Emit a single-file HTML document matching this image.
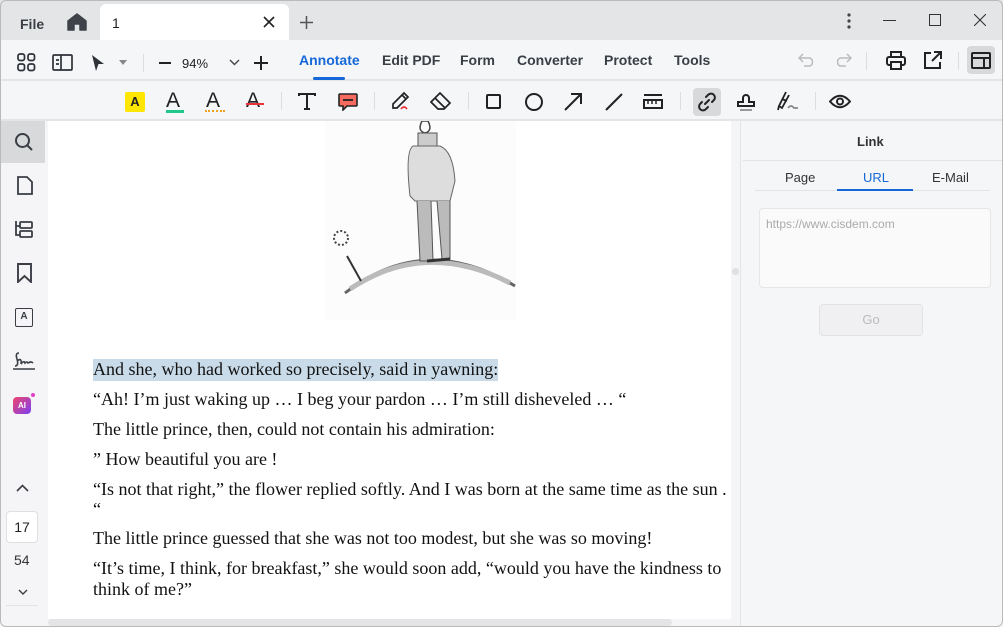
<!DOCTYPE html>
<html><head><meta charset="utf-8">
<style>
*{box-sizing:border-box;margin:0;padding:0}
body{width:1003px;height:627px;overflow:hidden;background:#e4e5e7;font-family:"Liberation Sans",sans-serif;position:relative;color:#2b2f36}
.a{position:absolute}
svg{display:block}
.menu{font-size:14px;color:#3a3e45;font-weight:bold}
.serif{font-family:"Liberation Serif",serif;font-size:18px;color:#111;white-space:nowrap}
</style></head><body>
<!-- window border -->
<div class="a" style="left:0;top:0;width:1003px;height:627px;border:1px solid #b9babc;border-radius:6px;z-index:50;pointer-events:none"></div>
<!-- title bar -->
<div class="a" style="left:0;top:0;width:1003px;height:40px;background:#e4e5e7"></div>
<div class="a menu" style="left:20px;top:16px;font-size:14px">File</div>
<svg class="a" style="left:67px;top:13px" width="20" height="18" viewBox="0 0 20 18"><path d="M10 1 L1 8 V17 H7 V11 H13 V17 H19 V8 Z" fill="#3f4349" stroke="#3f4349" stroke-linejoin="round" stroke-width="1.5"/></svg>
<div class="a" style="left:100px;top:4px;width:189px;height:37px;background:#fff;border-radius:6px 6px 0 0"></div>
<div class="a" style="left:112px;top:15px;font-size:14px;color:#222">1</div>
<svg class="a" style="left:263px;top:16px" width="12" height="12"><path d="M1 1L11 11M11 1L1 11" stroke="#222" stroke-width="1.6"/></svg>
<svg class="a" style="left:300px;top:16px" width="13" height="13"><path d="M6.5 0V13M0 6.5H13" stroke="#555" stroke-width="1.5"/></svg>
<svg class="a" style="left:846px;top:12px" width="6" height="18"><circle cx="3" cy="3" r="1.6" fill="#444"/><circle cx="3" cy="9" r="1.6" fill="#444"/><circle cx="3" cy="15" r="1.6" fill="#444"/></svg>
<div class="a" style="left:883px;top:20px;width:13px;height:1px;background:#333"></div>
<div class="a" style="left:929px;top:14px;width:12px;height:12px;border:1px solid #333"></div>
<svg class="a" style="left:974px;top:14px" width="12" height="12"><path d="M0 0L12 12M12 0L0 12" stroke="#333" stroke-width="1.1"/></svg>
<!-- toolbar -->
<div class="a" style="left:0;top:40px;width:1003px;height:40px;background:#f5f6f8;border-bottom:1px solid #e3e4e6"></div>
<svg class="a" style="left:17px;top:53px" width="19" height="19" fill="none" stroke="#2e3238" stroke-width="1.7"><rect x="1" y="1" width="6.5" height="6.5" rx="2"/><rect x="11" y="1" width="6.5" height="6.5" rx="2"/><rect x="1" y="11" width="6.5" height="6.5" rx="2"/><rect x="11" y="11" width="6.5" height="6.5" rx="2"/></svg>
<svg class="a" style="left:52px;top:54px" width="21" height="17" fill="none" stroke="#2e3238" stroke-width="1.7"><rect x="1" y="1" width="19" height="15" rx="1"/><path d="M9 1V16M4 6H7M4 10H7"/></svg>
<svg class="a" style="left:91px;top:54px" width="14" height="18"><path d="M1 1L13 10H7.5L5 17Z" fill="#2e3238"/></svg>
<svg class="a" style="left:119px;top:60px" width="8" height="5"><path d="M0 0H8L4 5Z" fill="#888"/></svg>
<div class="a" style="left:143px;top:54px;width:1px;height:18px;background:#ddd"></div>
<div class="a" style="left:159px;top:62px;width:12px;height:2px;background:#222"></div>
<div class="a" style="left:182px;top:56px;font-size:13px;color:#222">94%</div>
<svg class="a" style="left:229px;top:59px" width="11" height="7"><path d="M1 1L5.5 5.5L10 1" stroke="#444" stroke-width="1.4" fill="none"/></svg>
<svg class="a" style="left:254px;top:56px" width="14" height="14"><path d="M7 0V14M0 7H14" stroke="#222" stroke-width="2"/></svg>
<div class="a menu" style="left:299px;top:52px;color:#1668d8">Annotate</div>
<div class="a" style="left:313px;top:77px;width:32px;height:3px;border-radius:2px;background:#1668d8"></div>
<div class="a menu" style="left:382px;top:52px">Edit PDF</div>
<div class="a menu" style="left:460px;top:52px">Form</div>
<div class="a menu" style="left:517px;top:52px">Converter</div>
<div class="a menu" style="left:604px;top:52px">Protect</div>
<div class="a menu" style="left:674px;top:52px">Tools</div>
<svg class="a" style="left:798px;top:53px" width="18" height="14" fill="none" stroke="#bbb" stroke-width="1.5"><path d="M5 1L1 5L5 9M1 5H12A4.5 4.5 0 0 1 12 13H6"/></svg>
<svg class="a" style="left:834px;top:53px" width="18" height="14" fill="none" stroke="#bbb" stroke-width="1.5"><path d="M13 1L17 5L13 9M17 5H6A4.5 4.5 0 0 0 6 13H12"/></svg>
<div class="a" style="left:866px;top:52px;width:1px;height:18px;background:#ddd"></div>
<svg class="a" style="left:886px;top:51px" width="20" height="19" fill="none" stroke="#222" stroke-width="2"><path d="M5 6V1H15V6"/><rect x="1" y="6" width="18" height="8" rx="2"/><rect x="5" y="11" width="10" height="7" fill="#f5f6f8"/></svg>
<svg class="a" style="left:923px;top:51px" width="19" height="19" fill="none" stroke="#222" stroke-width="2"><path d="M8 2H2V17H17V11M11 1H18V8M18 1L9 10"/></svg>
<div class="a" style="left:958px;top:52px;width:1px;height:18px;background:#ddd"></div>
<div class="a" style="left:967px;top:46px;width:28px;height:28px;border-radius:4px;background:#d8d9db"></div>
<svg class="a" style="left:971px;top:52px" width="20" height="17" fill="none" stroke="#222" stroke-width="2"><rect x="1" y="1" width="18" height="15" rx="1"/><path d="M1 6H19M13 6V16"/></svg>
<!-- annotation toolbar -->
<div class="a" style="left:0;top:81px;width:1003px;height:39px;background:#f5f6f8;border-bottom:1px solid #e3e4e6"></div>
<div class="a" style="left:125px;top:92px;width:20px;height:20px;background:#ffe600;border-radius:2px;font-size:13px;font-weight:bold;text-align:center;line-height:20px;color:#222">A</div>
<div class="a" style="left:166px;top:89px;font-size:21px;color:#222">A</div><div class="a" style="left:166px;top:110px;width:18px;height:3px;background:#1ec98a"></div>
<div class="a" style="left:206px;top:89px;font-size:21px;color:#222">A</div><div class="a" style="left:205px;top:110px;width:20px;height:2px;border-bottom:2px dotted #f0a020"></div>
<div class="a" style="left:246px;top:89px;font-size:21px;color:#222">A</div><div class="a" style="left:246px;top:103px;width:18px;height:2px;background:#e8333a"></div>
<div class="a" style="left:281px;top:92px;width:1px;height:18px;background:#ddd"></div>
<svg class="a" style="left:298px;top:93px" width="18" height="17" fill="none" stroke="#222" stroke-width="2"><path d="M1 3V1H17V3M9 1V16M6 16H12"/></svg>
<svg class="a" style="left:338px;top:93px" width="20" height="18"><path d="M2 1H18A1 1 0 0 1 19 2V12A1 1 0 0 1 18 13H9L5 17V13H2A1 1 0 0 1 1 12V2A1 1 0 0 1 2 1Z" fill="#f46a5e" stroke="#222" stroke-width="1.6"/><path d="M5 7H15" stroke="#222" stroke-width="1.8"/></svg>
<div class="a" style="left:374px;top:92px;width:1px;height:18px;background:#ddd"></div>
<svg class="a" style="left:391px;top:91px" width="20" height="20" fill="none" stroke-width="1.7"><path d="M13 2L17 6L6 17H2V13Z" stroke="#222"/><path d="M11 4L15 8" stroke="#222"/><path d="M10 18Q13 14 16 18" stroke="#e8333a"/></svg>
<svg class="a" style="left:430px;top:92px" width="22" height="18" fill="none" stroke="#222" stroke-width="1.7"><path d="M8 17L1 10L10 1L20 11L14 17Z M5 6L15 16"/></svg>
<div class="a" style="left:468px;top:92px;width:1px;height:18px;background:#ddd"></div>
<div class="a" style="left:486px;top:94px;width:15px;height:15px;border:2px solid #222;border-radius:2px"></div>
<div class="a" style="left:525px;top:93px;width:18px;height:18px;border:2px solid #222;border-radius:50%"></div>
<svg class="a" style="left:564px;top:92px" width="19" height="19" fill="none" stroke="#222" stroke-width="2"><path d="M1 18L17 2M7 2H17V12"/></svg>
<svg class="a" style="left:605px;top:93px" width="18" height="18"><path d="M1 17L17 1" stroke="#222" stroke-width="2"/></svg>
<svg class="a" style="left:643px;top:94px" width="20" height="16" fill="none" stroke="#222" stroke-width="2"><path d="M1 1H19"/><rect x="1" y="6" width="18" height="8"/><path d="M5 6V10M9 6V10M13 6V10" stroke-width="1.5"/></svg>
<div class="a" style="left:680px;top:92px;width:1px;height:18px;background:#ddd"></div>
<div class="a" style="left:693px;top:88px;width:28px;height:28px;border-radius:4px;background:#d8d9db"></div>
<svg class="a" style="left:697px;top:92px" width="20" height="20" fill="none" stroke="#222" stroke-width="2" stroke-linecap="round"><path d="M8 12L12 8M9 5L11 3A3.5 3.5 0 0 1 17 8L15 10M11 15L9 17A3.5 3.5 0 0 1 3 12L5 10"/></svg>
<svg class="a" style="left:737px;top:91px" width="18" height="20" fill="none" stroke="#222" stroke-width="2"><path d="M6 11V7A3 3 0 1 1 12 7V11H17V15H1V11Z"/><path d="M3 19H15" stroke="#999"/></svg>
<svg class="a" style="left:776px;top:91px" width="22" height="20" fill="none" stroke="#222" stroke-width="1.8"><path d="M10 1L3 15L6 17L13 4M3 15L2 19M6 8L11 10"/><path d="M12 17Q15 13 18 17H22" stroke="#888"/></svg>
<div class="a" style="left:815px;top:92px;width:1px;height:18px;background:#ddd"></div>
<svg class="a" style="left:829px;top:94px" width="22" height="15" fill="none" stroke="#222" stroke-width="2"><path d="M1 7.5Q11 -4 21 7.5Q11 19 1 7.5Z"/><circle cx="11" cy="7.5" r="3"/></svg>
<!-- left sidebar -->
<div class="a" style="left:0;top:121px;width:48px;height:506px;background:#f5f5f7"></div>
<div class="a" style="left:1px;top:121px;width:44px;height:42px;background:#d8d9db"></div>
<svg class="a" style="left:14px;top:132px" width="20" height="20" fill="none" stroke="#3a3e45" stroke-width="2"><circle cx="8.5" cy="8.5" r="6.5"/><path d="M13.5 13.5L18 18"/></svg>
<svg class="a" style="left:17px;top:176px" width="16" height="19" fill="none" stroke="#3a3e45" stroke-width="1.8"><path d="M1 1H10L15 6V18H1Z"/></svg>
<svg class="a" style="left:14px;top:220px" width="19" height="19" fill="none" stroke="#3a3e45" stroke-width="1.8"><path d="M2 1V15H6M2 6H6"/><rect x="6" y="2" width="12" height="6" rx="1"/><rect x="6" y="11" width="12" height="6" rx="1"/></svg>
<svg class="a" style="left:17px;top:263px" width="15" height="20" fill="none" stroke="#3a3e45" stroke-width="1.9"><path d="M1 1H14V19L7.5 13L1 19Z"/></svg>
<div class="a" style="left:15px;top:308px;width:18px;height:19px;border:1.8px solid #3a3e45;border-radius:2px;font-size:10px;font-weight:bold;text-align:center;line-height:16px;color:#3a3e45">A</div>
<svg class="a" style="left:12px;top:351px" width="24" height="20" fill="none" stroke="#3a3e45" stroke-width="1.6"><path d="M1 18H23M7 2Q3 2 5 8Q7 15 3 15M5 10Q10 6 9 13Q12 9 13 12Q15 10 16 12Q19 10 21 12"/></svg>
<div class="a" style="left:13px;top:397px;width:18px;height:17px;border-radius:4px;background:linear-gradient(135deg,#f0466b,#7b3ff2);font-size:8px;font-weight:bold;color:#fff;text-align:center;line-height:17px">AI</div>
<div class="a" style="left:31px;top:393px;width:4px;height:4px;background:#e040c8;border-radius:50%"></div>
<svg class="a" style="left:16px;top:484px" width="13" height="8"><path d="M1 7L6.5 1.5L12 7" stroke="#3a3e45" stroke-width="1.6" fill="none"/></svg>
<div class="a" style="left:6px;top:511px;width:32px;height:32px;background:#fff;border:1px solid #e0e0e2;border-radius:4px;text-align:center;line-height:30px;font-size:14px;color:#222">17</div>
<div class="a" style="left:14px;top:552px;font-size:14px;color:#333">54</div>
<svg class="a" style="left:18px;top:589px" width="10" height="6"><path d="M1 1L5 5L9 1" stroke="#3a3e45" stroke-width="1.4" fill="none"/></svg>
<div class="a" style="left:6px;top:605px;width:32px;height:1px;background:#e3e4e6"></div>
<!-- document -->
<div class="a" style="left:48px;top:121px;width:683px;height:498px;background:#fff"></div>
<div class="a" style="left:48px;top:619px;width:683px;height:8px;background:#f5f5f7"></div>
<div class="a" style="left:48px;top:619px;width:624px;height:7px;background:#e4e4e6;border-radius:4px"></div>
<div class="a" style="left:731px;top:121px;width:9px;height:506px;background:#f5f5f7"></div>
<div class="a" style="left:732px;top:268px;width:7px;height:7px;border-radius:50%;background:#e0e0e2"></div>
<div class="a" style="left:325px;top:121px;width:191px;height:199px;background:#fcfcfc"></div>
<svg class="a" style="left:325px;top:121px" width="191" height="199">
<path d="M20 172Q100 110 190 165" stroke="#666" stroke-width="3" fill="none"/>
<path d="M25 168Q100 118 185 162" stroke="#bbb" stroke-width="5" fill="none"/>
<path d="M22 135L36 160" stroke="#333" stroke-width="2"/>
<circle cx="16" cy="117" r="7" fill="none" stroke="#444" stroke-width="2" stroke-dasharray="2 2"/>
<path d="M97 0Q92 10 100 12Q108 10 103 0Z" fill="none" stroke="#444" stroke-width="1.5"/>
<path d="M93 12H112V25H93Z" fill="#ccc" stroke="#555"/>
<path d="M88 25Q80 30 85 75L90 80H125L130 60Q128 30 115 25Z" fill="#ddd" stroke="#666"/>
<path d="M92 80L95 140H108L106 80M112 80L117 138H125L125 80" fill="#bbb" stroke="#555"/>
<path d="M102 140L125 138" stroke="#333" stroke-width="3"/>
</svg>
<div class="a" style="left:93px;top:359px;width:405px;height:22px;background:#c9dbe8"></div>
<div class="a serif" style="left:93px;top:359px">And she, who had worked so precisely, said in yawning:</div>
<div class="a serif" style="left:93px;top:389px">“Ah! I’m just waking up … I beg your pardon … I’m still disheveled … “</div>
<div class="a serif" style="left:93px;top:419px">The little prince, then, could not contain his admiration:</div>
<div class="a serif" style="left:93px;top:449px">” How beautiful you are !</div>
<div class="a serif" style="left:93px;top:479px">“Is not that right,” the flower replied softly. And I was born at the same time as the sun .</div>
<div class="a serif" style="left:93px;top:499px">“</div>
<div class="a serif" style="left:93px;top:528px">The little prince guessed that she was not too modest, but she was so moving!</div>
<div class="a serif" style="left:93px;top:558px">“It’s time, I think, for breakfast,” she would soon add, “would you have the kindness to</div>
<div class="a serif" style="left:93px;top:579px">think of me?”</div>
<!-- right panel -->
<div class="a" style="left:740px;top:121px;width:263px;height:506px;background:#f5f6f8;border-left:1px solid #e3e4e6"></div>
<div class="a" style="left:857px;top:134px;font-size:13px;font-weight:bold;color:#333">Link</div>
<div class="a" style="left:743px;top:160px;width:260px;height:1px;background:#e3e4e6"></div>
<div class="a" style="left:785px;top:170px;font-size:13px;color:#333">Page</div>
<div class="a" style="left:863px;top:170px;font-size:13px;color:#1668d8">URL</div>
<div class="a" style="left:932px;top:170px;font-size:13px;color:#333">E-Mail</div>
<div class="a" style="left:755px;top:190px;width:235px;height:1px;background:#e3e4e6"></div>
<div class="a" style="left:837px;top:189px;width:76px;height:2px;background:#1668d8"></div>
<div class="a" style="left:759px;top:208px;width:232px;height:80px;background:#fafafa;border:1px solid #e6e6e8;border-radius:4px"></div>
<div class="a" style="left:766px;top:217px;font-size:12px;color:#aaa">https://www.cisdem.com</div>
<div class="a" style="left:819px;top:304px;width:104px;height:32px;background:#f0f0f2;border:1px solid #e2e2e4;border-radius:4px;text-align:center;line-height:30px;font-size:13px;color:#bbb">Go</div>
</body></html>
